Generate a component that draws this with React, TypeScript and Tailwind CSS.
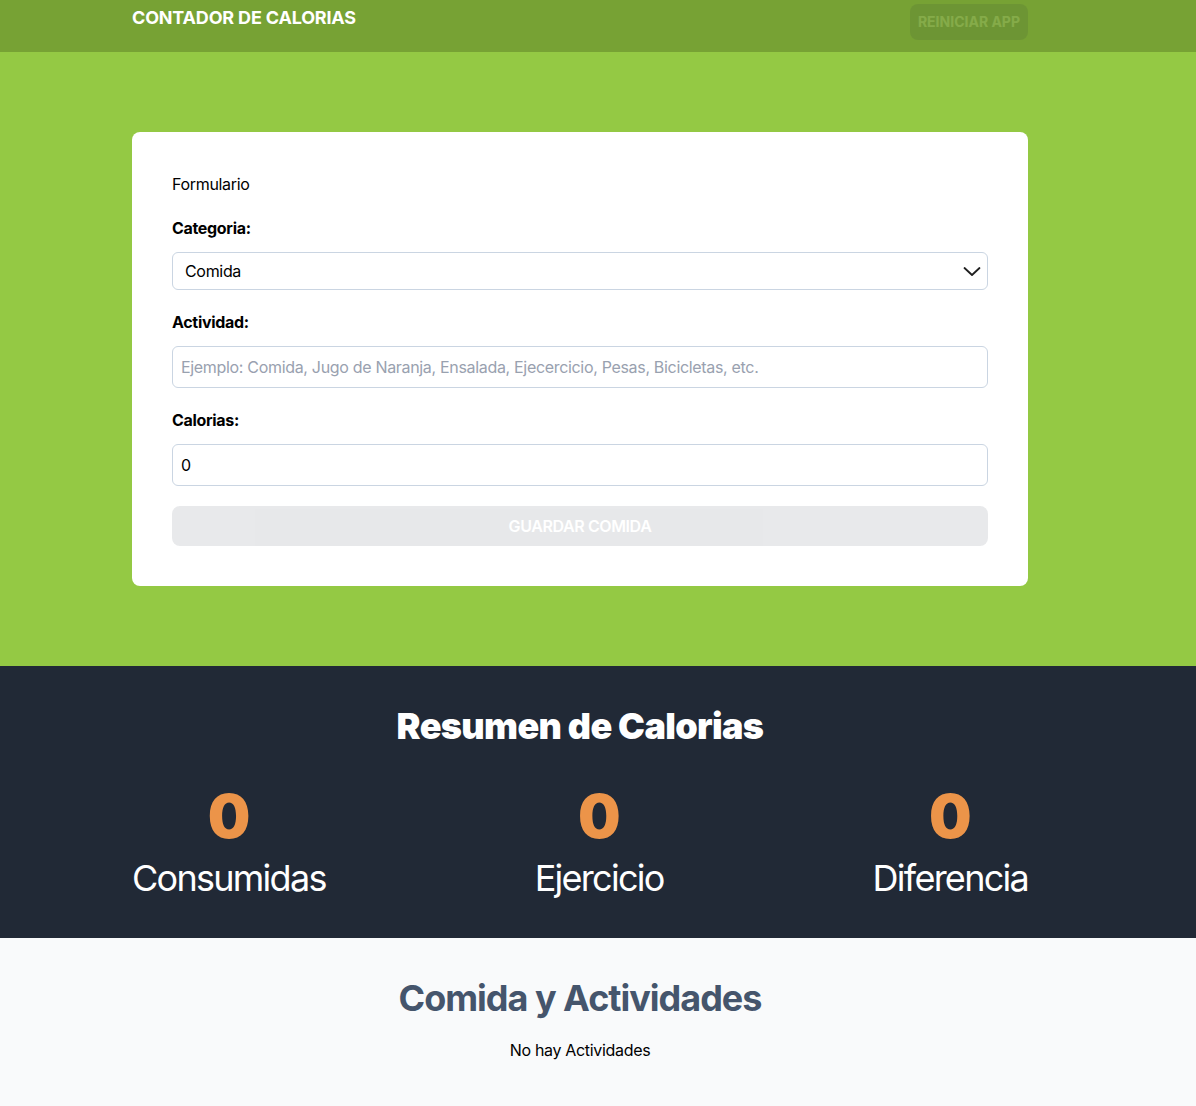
import React, { useState } from 'react';

const categories = [
  { id: 1, name: 'Comida' },
  { id: 2, name: 'Ejercicio' },
];

export default function App() {
  const [category, setCategory] = useState(1);
  const [activity, setActivity] = useState('');
  const [calories, setCalories] = useState(0);

  const isValid = activity.trim() !== '' && calories > 0;

  return (
    <div className="min-h-screen bg-[#f9fafb] font-['Inter',_'Noto_Sans',sans-serif] text-black tracking-[-0.02em]">
      {/* Header */}
      <header className="bg-[#77a234] pt-1 pb-3">
        <div className="pr-9">
          <div className="max-w-4xl mx-auto flex justify-between items-start">
            <h1 className="text-lg leading-7 font-bold text-white uppercase tracking-[-0.01em]">Contador de Calorias</h1>
            <button
              disabled
              className="bg-gray-800 text-white font-bold uppercase text-sm leading-5 px-2 py-2 rounded-lg tracking-normal disabled:opacity-10"
            >
              Reiniciar App
            </button>
          </div>
        </div>
      </header>

      {/* Form */}
      <section className="bg-[#94c944] py-20">
        <div className="pr-9">
          <div className="max-w-4xl mx-auto bg-white rounded-lg p-10">
            <form className="space-y-5" onSubmit={(e) => e.preventDefault()}>
              <p className="text-base leading-6">Formulario</p>

              <div className="grid grid-cols-1 gap-3">
                <label htmlFor="category" className="font-bold text-base leading-6">Categoria:</label>
                <div className="relative">
                  <select
                    id="category"
                    value={category}
                    onChange={(e) => setCategory(+e.target.value)}
                    className="appearance-none w-full h-[38px] border border-slate-300 rounded-md px-3 bg-white text-base outline-none"
                  >
                    {categories.map((c) => (
                      <option key={c.id} value={c.id}>{c.name}</option>
                    ))}
                  </select>
                  <svg
                    className="absolute right-[7px] top-1/2 -translate-y-1/2 pointer-events-none"
                    width="18"
                    height="12"
                    viewBox="0 0 18 12"
                    fill="none"
                  >
                    <polyline points="1.5,3 9,10 16.5,3" stroke="#1f1f1f" strokeWidth="1.8" strokeLinecap="round" strokeLinejoin="round" />
                  </svg>
                </div>
              </div>

              <div className="grid grid-cols-1 gap-3">
                <label htmlFor="activity" className="font-bold text-base leading-6">Actividad:</label>
                <input
                  id="activity"
                  type="text"
                  value={activity}
                  onChange={(e) => setActivity(e.target.value)}
                  placeholder="Ejemplo: Comida, Jugo de Naranja, Ensalada, Ejecercicio, Pesas, Bicicletas, etc."
                  className="h-[42px] border border-slate-300 rounded-md p-2 text-base outline-none placeholder:text-gray-400"
                />
              </div>

              <div className="grid grid-cols-1 gap-3">
                <label htmlFor="calories" className="font-bold text-base leading-6">Calorias:</label>
                <input
                  id="calories"
                  type="number"
                  value={calories}
                  onChange={(e) => setCalories(+e.target.value)}
                  className="h-[42px] border border-slate-300 rounded-md p-2 text-base outline-none"
                />
              </div>

              <button
                type="submit"
                disabled={!isValid}
                className="w-full h-10 bg-gray-800 text-white font-semibold uppercase text-base rounded-lg tracking-[-0.025em] disabled:opacity-10"
              >
                Guardar Comida
              </button>
            </form>
          </div>
        </div>
      </section>

      {/* Summary */}
      <section className="bg-[#212936] py-10">
        <div className="pr-9">
          <div className="max-w-4xl mx-auto">
            <h2 className="text-4xl leading-10 font-black text-white text-center tracking-[-0.018em]">Resumen de Calorias</h2>
            <div className="flex justify-between items-center mt-10">
              {['Consumidas', 'Ejercicio', 'Diferencia'].map((label) => (
                <p key={label} className="flex flex-col items-center gap-3 text-white text-center">
                  <span className="font-black text-6xl leading-[60px] text-[#ec9449]">0</span>
                  <span className="text-4xl leading-10 tracking-[-0.048em]">{label}</span>
                </p>
              ))}
            </div>
          </div>
        </div>
      </section>

      {/* Activities */}
      <section className="p-10">
        <div className="pr-9">
          <div className="max-w-4xl mx-auto">
            <h2 className="text-4xl leading-10 font-bold text-slate-600 text-center tracking-[-0.028em]">Comida y Actividades</h2>
            <p className="text-center mt-5 text-base leading-6">No hay Actividades</p>
          </div>
        </div>
      </section>
    </div>
  );
}
